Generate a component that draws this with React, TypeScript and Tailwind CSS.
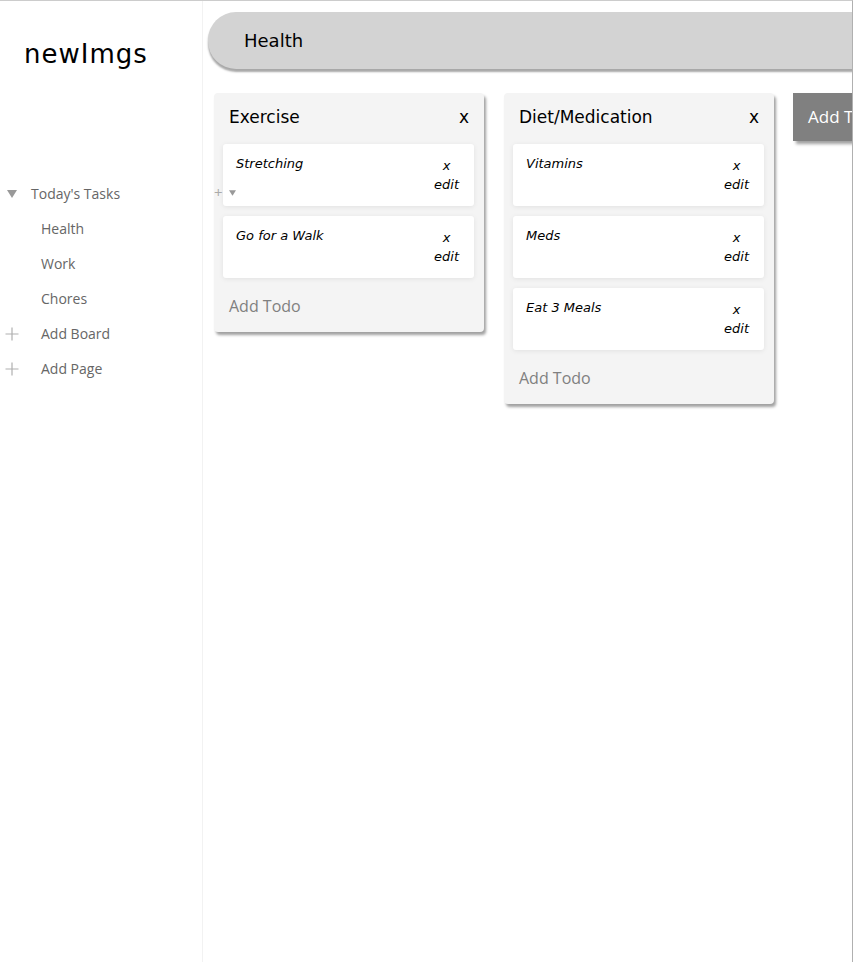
import React from "react";

const dv = { fontFamily: '"DejaVu Sans", Verdana, sans-serif' };
const os = { fontFamily: '"Open Sans", "Noto Sans", sans-serif' };

type Col = { title: string; items: string[] };
const cols: Col[] = [
  { title: "Exercise", items: ["Stretching", "Go for a Walk"] },
  { title: "Diet/Medication", items: ["Vitamins", "Meds", "Eat 3 Meals"] },
];

function Plus() {
  return (
    <svg width="14" height="14" viewBox="0 0 14 14" className="shrink-0">
      <path d="M7 0.5V13.5M0.5 7H13.5" stroke="#b0b0b0" strokeWidth="1.2" />
    </svg>
  );
}

function Tri({ w, h, color }: { w: number; h: number; color: string }) {
  return (
    <svg width={w} height={h} viewBox="0 0 10 8" className="shrink-0">
      <path d="M0 0H10L5 8Z" fill={color} />
    </svg>
  );
}

export default function App() {
  return (
    <div className="flex h-[962px] w-[853px] overflow-hidden border-t border-r border-t-[#cccccc] border-r-[#b0b0b0] bg-white">
      <aside
        className="relative w-[203px] shrink-0 border-r border-[#f2f2f2] text-[14px] text-[#666666]"
        style={os}
      >
        <div className="pl-[24px] pt-[38px] text-[26px] leading-[30px] tracking-[1px] text-black" style={dv}>
          newImgs
        </div>
        <div className="mt-[107px]">
          <div className="relative flex h-[35px] items-center">
            <span className="ml-[7px] w-[24px]">
              <Tri w={10} h={8} color="#999999" />
            </span>
            <span>Today's Tasks</span>
            <span className="absolute left-[214px] top-[9px] flex items-center gap-[6px] text-[15px] leading-none text-[#aaaaaa]">
              <span>+</span>
              <Tri w={7} h={6} color="#999999" />
            </span>
          </div>
          {["Health", "Work", "Chores"].map((t) => (
            <div key={t} className="flex h-[35px] items-center pl-[41px]">
              {t}
            </div>
          ))}
          {["Add Board", "Add Page"].map((t) => (
            <div key={t} className="flex h-[35px] items-center pl-[5px]">
              <Plus />
              <span className="ml-[22px]">{t}</span>
            </div>
          ))}
        </div>
      </aside>
      <main className="min-w-0 flex-1 overflow-hidden">
        <div
          className="ml-[5px] mt-[11px] flex h-[57px] w-[700px] items-center rounded-l-[28px] bg-[#d3d3d3] pl-[36px] text-[18px] text-black shadow-[0_3px_2px_#a8a8a8]"
          style={dv}
        >
          Health
        </div>
        <div className="ml-[11px] mt-[24px] flex w-[900px] items-start gap-[20px]">
          {cols.map((c) => (
            <div
              key={c.title}
              className="w-[270px] shrink-0 rounded-[4px] bg-[#f4f4f4] shadow-[2px_3px_3px_#a0a0a0]"
            >
              <div className="flex items-center justify-between pl-[15px] pr-[15px] pt-[14px] text-[17px] leading-[20px] text-black" style={dv}>
                <span>{c.title}</span>
                <span>x</span>
              </div>
              <div className="mt-[17px] flex flex-col gap-[10px] px-[9px] pr-[10px]">
                {c.items.map((it) => (
                  <div
                    key={it}
                    className="flex h-[62px] justify-between rounded-[3px] bg-white pl-[13px] pr-[15px] pt-[12px] text-[13px] italic text-black shadow-[0_1px_5px_rgba(0,0,0,0.08)]"
                    style={dv}
                  >
                    <span className="leading-[16px]">{it}</span>
                    <div className="flex flex-col items-center leading-[19px]">
                      <span>x</span>
                      <span>edit</span>
                    </div>
                  </div>
                ))}
              </div>
              <div className="pl-[15px] pb-[16px] pt-[18px] text-[16px] leading-[20px] text-[#808080]" style={os}>
                Add Todo
              </div>
            </div>
          ))}
          <div
            className="-ml-[1px] flex h-[48px] shrink-0 items-center whitespace-nowrap bg-[#808080] px-[15px] text-[17px] text-white shadow-[3px_3px_3px_#a0a0a0]"
            style={os}
          >
            Add Todo List
          </div>
        </div>
      </main>
    </div>
  );
}
